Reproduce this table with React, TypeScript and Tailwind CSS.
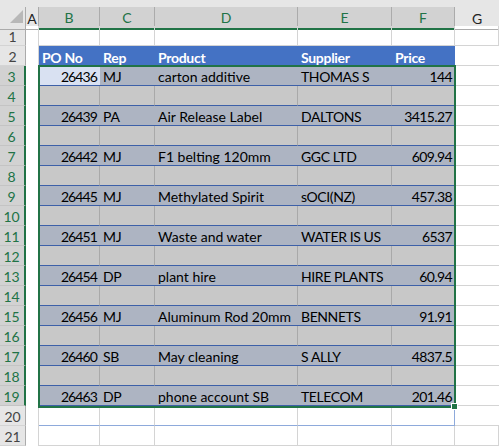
import React from "react";

type Row = { po: string; rep: string; product: string; supplier: string; price: string };

const data: Row[] = [
  { po: "26436", rep: "MJ", product: "carton additive", supplier: "THOMAS S", price: "144" },
  { po: "26439", rep: "PA", product: "Air Release Label", supplier: "DALTONS", price: "3415.27" },
  { po: "26442", rep: "MJ", product: "F1 belting 120mm", supplier: "GGC LTD", price: "609.94" },
  { po: "26445", rep: "MJ", product: "Methylated Spirit", supplier: "sOCI(NZ)", price: "457.38" },
  { po: "26451", rep: "MJ", product: "Waste and water", supplier: "WATER IS US", price: "6537" },
  { po: "26454", rep: "DP", product: "plant hire", supplier: "HIRE PLANTS", price: "60.94" },
  { po: "26456", rep: "MJ", product: "Aluminum Rod 20mm", supplier: "BENNETS", price: "91.91" },
  { po: "26460", rep: "SB", product: "May cleaning", supplier: "S ALLY", price: "4837.5" },
  { po: "26463", rep: "DP", product: "phone account SB", supplier: "TELECOM", price: "201.46" },
];

const grid = "grid grid-cols-[26px_13px_61px_55px_143px_94px_63px_1fr]";

function RowHead({ n, selected }: { n: number; selected?: boolean }) {
  return (
    <div
      className={
        selected
          ? "h-[20px] flex items-center justify-center pr-[1px] pt-[2px] bg-[#d2d2d2] text-[#217346] border-r-2 border-r-[#217346] border-b border-b-[#c4c4c4]"
          : "h-[20px] flex items-center justify-center pt-[2px] bg-[#e6e6e6] text-[#444444] border-r border-r-[#ababab] border-b border-b-[#d4d4d4]"
      }
    >
      {n}
    </div>
  );
}

function ColA() {
  return <div className="h-[20px] border-r border-r-[#d4d4d4]" />;
}

function Plain({ n }: { n: number }) {
  return (
    <div className={grid}>
      <RowHead n={n} />
      <ColA />
      {[0, 1, 2, 3, 4, 5].map((i) => (
        <div key={i} className="h-[20px] border-r border-b border-[#d4d4d4]" />
      ))}
    </div>
  );
}

function Cell({
  children,
  right,
  className,
}: {
  children?: React.ReactNode;
  right?: boolean;
  className: string;
}) {
  return (
    <div
      className={
        "h-[20px] flex items-center pt-[2px] px-[3px] whitespace-nowrap overflow-hidden " +
        (right ? "justify-end " : "") +
        className
      }
    >
      {children}
    </div>
  );
}

export default function App() {
  const rows: React.ReactNode[] = [];
  for (let n = 3; n <= 19; n++) {
    const idx = (n - 3) / 2;
    const filled = (n - 3) % 2 === 0;
    const r = filled ? data[idx] : null;
    const line = "border-b border-b-[#3d60a8]";
    const base = filled ? "bg-[#adb4c2] " + line : "bg-[#c8c8c8] border-r border-r-[#a9a9a9] " + line;
    rows.push(
      <div key={n} className={grid}>
        <RowHead n={n} selected />
        <div className="h-[20px]" />
        <Cell right className={"tracking-[-0.9px] " + (n === 3 ? "bg-[#d9e1f2] " + line : base)}>
          {r?.po}
        </Cell>
        <Cell className={"tracking-[-0.3px] " + base}>{r?.rep}</Cell>
        <Cell className={base}>{r?.product}</Cell>
        <Cell className={"tracking-[-0.4px] " + base}>{r?.supplier}</Cell>
        <Cell right className={"tracking-[-0.6px] " + base}>
          {r?.price}
        </Cell>
        <div className="h-[20px] border-b border-[#d4d4d4]" />
      </div>
    );
  }

  return (
    <div className="relative w-[499px] h-[447px] overflow-hidden bg-white text-[14px] text-black font-['Lato',sans-serif]">
      <div className="h-[7px] bg-[#e6e6e6]" />
      <div className={grid + " h-[19px] bg-[#e6e6e6]"}>
        <div className="relative border-r border-b border-[#ababab]">
          <svg className="absolute left-[10px] top-[3px]" width="13" height="13" viewBox="0 0 13 13">
            <polygon points="13,0 13,13 0,13" fill="#b8b8b8" />
          </svg>
        </div>
        <div className="flex items-center justify-center border-r border-b border-[#ababab] text-[#222]">A</div>
        {["B", "C", "D", "E", "F"].map((c) => (
          <div
            key={c}
            className="flex items-center justify-center bg-[#d2d2d2] text-[#217346] border-r border-r-[#ababab] border-b-2 border-b-[#217346]"
          >
            {c}
          </div>
        ))}
        <div className="flex items-center justify-center border-b border-[#ababab] text-[#222]">G</div>
      </div>

      <Plain n={1} />

      <div className={grid}>
        <RowHead n={2} />
        <ColA />
        {["PO No", "Rep", "Product", "Supplier", "Price"].map((h) => (
          <Cell key={h} className="bg-[#4472c4] text-white font-bold tracking-[-0.3px]">
            {h}
          </Cell>
        ))}
        <div className="h-[20px] border-b border-[#d4d4d4]" />
      </div>

      {rows}

      <div className={grid}>
        <RowHead n={20} />
        <ColA />
        <div className="h-[20px] border-r border-r-[#d4d4d4] border-b border-b-[#8eaadb]" />
        <div className="h-[20px] border-r border-r-[#d4d4d4] border-b border-b-[#8eaadb]" />
        <div className="h-[20px] border-r border-r-[#d4d4d4] border-b border-b-[#8eaadb]" />
        <div className="h-[20px] border-r border-r-[#d4d4d4] border-b border-b-[#8eaadb]" />
        <div className="h-[20px] border-r border-r-[#8eaadb] border-b border-b-[#8eaadb]" />
        <div className="h-[20px] border-b border-[#d4d4d4]" />
      </div>

      <Plain n={21} />

      {/* selection */}
      <div className="absolute left-[38px] top-[65px] w-[418px] h-[343px] border-2 border-[#217346] pointer-events-none" />
      <div className="absolute left-[451px] top-[403px] w-[7px] h-[7px] bg-[#217346] border border-white" />
    </div>
  );
}
